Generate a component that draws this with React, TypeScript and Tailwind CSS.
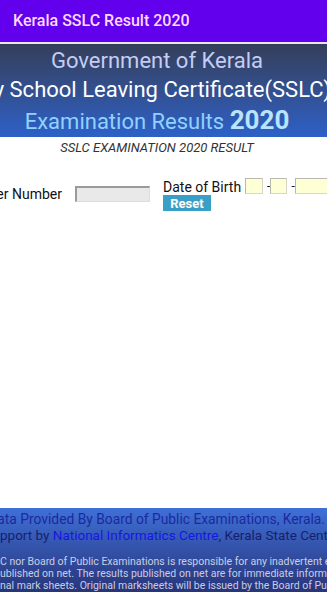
import React from "react";

function Cut({ pre, rest, className }: { pre: string; rest: React.ReactNode; className?: string }) {
  return (
    <div className={"flex whitespace-nowrap " + (className ?? "")}>
      <div className="w-0 min-w-0 shrink-0 flex justify-end">
        <span>{pre}</span>
      </div>
      <span>{rest}</span>
    </div>
  );
}

export default function App() {
  return (
    <div
      className="w-[327px] h-[592px] overflow-hidden bg-white flex flex-col"
      style={{ fontFamily: "Roboto, 'Noto Sans', Arial, sans-serif" }}
    >
      {/* App bar */}
      <div className="h-[42px] shrink-0 bg-[#6200ee] flex items-center pl-[13px]">
        <span className="text-[16px] font-medium text-[#fbd8ff] leading-none">Kerala SSLC Result 2020</span>
      </div>
      <div className="h-[2px] shrink-0 bg-[#e6e6ee]" />

      {/* Banner */}
      <div className="h-[93px] shrink-0 bg-gradient-to-b from-[#343e5a] to-[#2d60c8] flex flex-col overflow-hidden">
        <div className="flex justify-center pr-[13px] mt-[4px] text-[22px] leading-[26px] text-[#c5cdf2] whitespace-nowrap">
          Government of Kerala
        </div>
        <div className="flex justify-end mr-[-4px] mt-[3px] text-[22px] leading-[26px] text-white whitespace-nowrap">
          Secondary School Leaving Certificate(SSLC)
        </div>
        <div className="flex justify-center items-baseline pr-[13px] mt-[3px] leading-[28px] whitespace-nowrap">
          <span className="text-[22px] text-[#8fd2ff]">Examination Results&nbsp;</span>
          <span className="text-[26px] font-bold text-[#b8e4ff]">2020</span>
        </div>
      </div>

      {/* Subtitle */}
      <div className="flex justify-center pr-[13px] mt-[3px] text-[13px] italic text-[#333] leading-[16px] whitespace-nowrap">
        SSLC EXAMINATION 2020 RESULT
      </div>

      {/* Form */}
      <div className="flex mt-[22px]">
        <div className="flex items-center mt-[8px] h-[16px]">
          <div className="w-[62px] shrink-0 flex justify-end whitespace-nowrap text-[14px] text-[#111] leading-none">
            <span>Register Number</span>
          </div>
          <div className="ml-[13px] w-[75px] h-[16px] bg-[#e9e9e9] border-t-2 border-l-2 border-b border-r border-t-[#9a9a9a] border-l-[#9a9a9a] border-b-[#dcdcdc] border-r-[#dcdcdc]" />
        </div>
        <div className="flex flex-col ml-[13px]">
          <div className="flex items-center whitespace-nowrap text-[14px] text-[#111] leading-none">
            <span className="mr-[4px] mt-[2px]">Date of Birth</span>
            <div className="w-[18px] h-[16px] bg-[#ffffd6] border border-[#d8d8c8] border-t-[#b8b8b0] border-l-[#b8b8b0]" />
            <span className="ml-[4px] text-[12px]">-</span>
            <div className="w-[17px] h-[16px] bg-[#ffffd6] border border-[#d8d8c8] border-t-[#b8b8b0] border-l-[#b8b8b0]" />
            <span className="ml-[4px] text-[12px]">-</span>
            <div className="w-[34px] h-[16px] bg-[#ffffd6] border border-[#d8d8c8] border-t-[#b8b8b0] border-l-[#b8b8b0]" />
          </div>
          <div className="mt-[1px] w-[48px] h-[16px] bg-[#3a9fc6] flex items-center justify-center">
            <span className="text-[13px] font-bold text-white leading-none">Reset</span>
          </div>
        </div>
      </div>

      <div className="flex-1" />

      {/* Footer */}
      <div className="h-[84px] shrink-0 bg-gradient-to-b from-[#3f70d8] to-[#27357a] flex flex-col overflow-hidden pt-[3px]">
        <div className="flex justify-end pr-[2px] text-[13.8px] leading-[16px] text-[#1a2a9e] whitespace-nowrap">
          Data Provided By Board of Public Examinations, Kerala.
        </div>
        <Cut
          className="text-[13.5px] leading-[16px] text-[#16206e]"
          pre="Technical Su"
          rest={
            <>
              pport by <span className="text-[#1616e6]">National Informatics Centre</span>, Kerala State Centre
            </>
          }
        />
        <div className="h-[25px]" />
        <Cut
          className="text-[10.5px] leading-[12px] text-[#c9cde2]"
          pre="Neither NI"
          rest="C nor Board of Public Examinations is responsible for any inadvertent error"
        />
        <Cut
          className="text-[10.5px] leading-[12px] text-[#c9cde2]"
          pre="being p"
          rest="ublished on net. The results published on net are for immediate information"
        />
        <Cut
          className="text-[10.5px] leading-[12px] text-[#c9cde2]"
          pre="treated as origi"
          rest="nal mark sheets. Original marksheets will be issued by the Board of Public"
        />
      </div>
    </div>
  );
}
